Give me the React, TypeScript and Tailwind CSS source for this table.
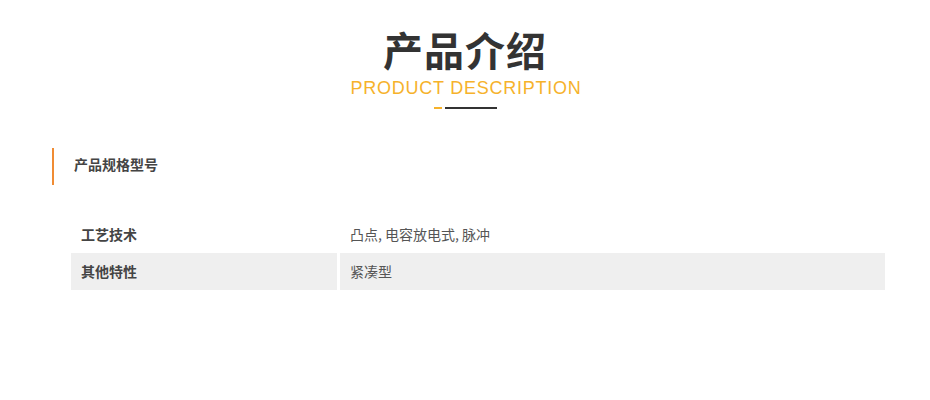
export default function App() {
  const cjk = { fontFamily: '"Noto Sans CJK SC", "Liberation Sans", sans-serif' };
  return (
    <div className="w-[930px] h-[400px] bg-white" style={cjk}>
      <div className="pt-[28px] flex flex-col items-center">
        <h1 className="text-[40px] leading-[42px] font-bold text-[#333333] tracking-[1px]">产品介绍</h1>
        <p
          className="mt-[8px] text-[18px] leading-[20px] text-[#f6b22b] tracking-[0.75px] pl-[2px]"
          style={{ fontFamily: '"Liberation Sans", Arial, sans-serif' }}
        >
          PRODUCT DESCRIPTION
        </p>
        <div className="mt-[9px] flex items-center gap-[3px]">
          <span className="block w-[8px] h-[2px] bg-[#f6b22b]" />
          <span className="block w-[52px] h-[2px] bg-[#333333]" />
        </div>
      </div>
      <div className="mt-[39px] ml-[52px] h-[37px] border-l-2 border-[#f08c34] flex items-center pl-[20px] pb-[4px] text-[14px] font-bold text-[#444444]">
        产品规格型号
      </div>
      <div className="mt-[31px] ml-[71px] w-[814px] flex flex-col text-[14px] text-[#444444]">
        <div className="flex h-[37px]">
          <div className="w-[266px] flex items-center pl-[10px] font-bold">工艺技术</div>
          <div className="ml-[3px] flex-1 flex items-center pl-[10px] text-[#555555]">凸点, 电容放电式, 脉冲</div>
        </div>
        <div className="flex h-[37px]">
          <div className="w-[266px] flex items-center pl-[10px] font-bold bg-[#efefef]">其他特性</div>
          <div className="ml-[3px] flex-1 flex items-center pl-[10px] bg-[#efefef] text-[#555555]">紧凑型</div>
        </div>
      </div>
    </div>
  );
}
